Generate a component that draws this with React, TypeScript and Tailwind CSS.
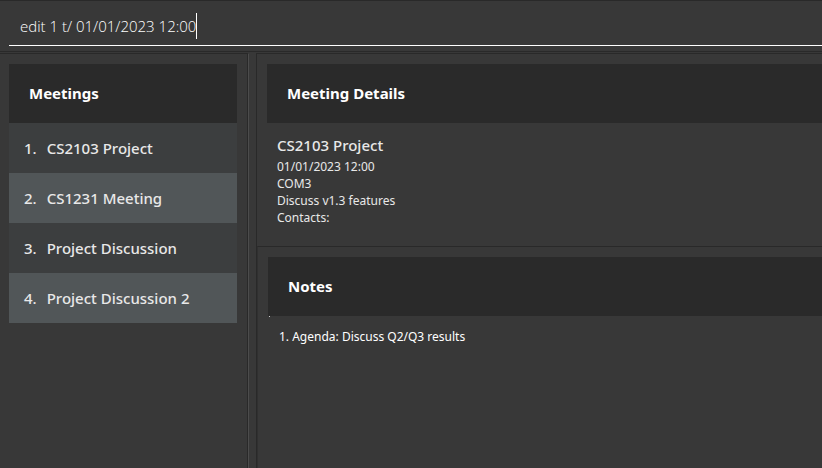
import { useState } from "react";

const meetings = [
  "CS2103 Project",
  "CS1231 Meeting",
  "Project Discussion",
  "Project Discussion 2",
];

const details = ["01/01/2023 12:00", "COM3", "Discuss v1.3 features", "Contacts:"];

function PanelHeader({ title }: { title: string }) {
  return (
    <h2 className="flex h-[59px] items-center bg-[#2a2a2a] px-5 pb-[2px] text-[15px] leading-5 font-bold text-white">
      {title}
    </h2>
  );
}

function CommandBox() {
  const [command, setCommand] = useState("edit 1 t/ 01/01/2023 12:00");
  return (
    <div className="border-y border-[#292929] pb-[5px] pl-[9px]">
      <div className="flex h-[45px] items-center border-b border-white pt-[5px] pl-[11px]">
        <input
          aria-label="Command"
          value={command}
          onChange={(e) => setCommand(e.target.value)}
          className="field-sizing-content bg-transparent font-['Open_Sans',sans-serif] text-[15px] leading-6 font-light text-white caret-transparent outline-none"
        />
        <span className="h-[26px] w-px bg-white" />
      </div>
    </div>
  );
}

export default function App() {
  return (
    <div className="flex min-h-screen flex-col bg-[#383838] font-['Noto_Sans','Open_Sans',sans-serif]">
      <CommandBox />
      <main className="mt-px flex grow">
        <section className="w-[249px] shrink-0 border-t border-r border-t-[#292929] border-r-[#4c4c4c]">
          <div className="h-full border-r border-[#292929] pt-[10px] pr-[10px] pl-[9px]">
            <PanelHeader title="Meetings" />
            <ol>
              {meetings.map((name, i) => (
                <li
                  key={name}
                  className="flex h-[50px] items-center gap-[10px] bg-[#3c3e3f] pl-[15px] text-[15px] leading-5 font-medium text-[#e8e8e8] even:bg-[#515658]"
                >
                  <span>{i + 1}.</span>
                  <span>{name}</span>
                </li>
              ))}
            </ol>
          </div>
        </section>
        <div className="ml-[7px] flex min-w-0 grow flex-col border-t border-l border-[#292929]">
          <section className="pt-[10px] pb-5 pl-[10px]">
            <PanelHeader title="Meeting Details" />
            <div className="pt-3 pl-[10px] text-[#e8e8e8]">
              <h3 className="mb-[3px] text-[15px] leading-5 font-medium">CS2103 Project</h3>
              {details.map((line) => (
                <p key={line} className="text-[12px] leading-[17px]">
                  {line}
                </p>
              ))}
            </div>
          </section>
          <section className="grow border-t border-l border-t-[#292929] border-l-[#303030] pt-[10px] pl-[10px]">
            <PanelHeader title="Notes" />
            <div className="ml-px h-px w-px bg-[#cccccc]" />
            <p className="pt-[11px] pl-[11px] text-[12px] leading-[17px] text-white">
              1. Agenda: Discuss Q2/Q3 results
            </p>
          </section>
        </div>
      </main>
    </div>
  );
}
